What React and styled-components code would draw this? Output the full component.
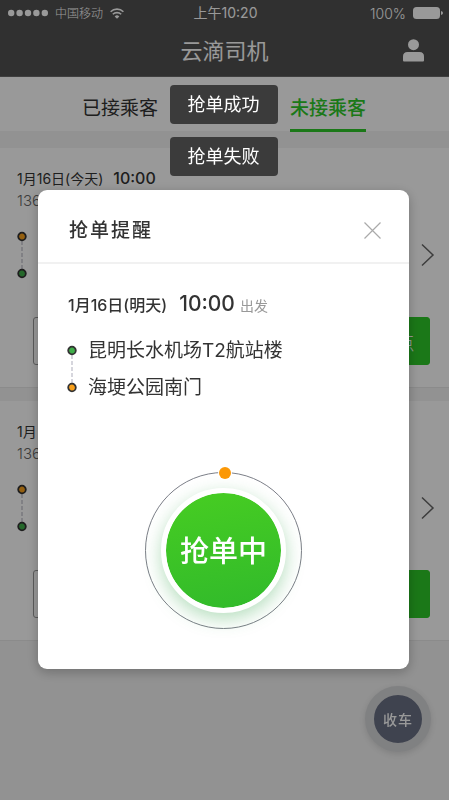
import React from "react";
import styled, { createGlobalStyle } from "styled-components";

const Global = createGlobalStyle`
  *, *::before, *::after { box-sizing: border-box; }
  body { margin: 0; background: #f3f3f3; color: #333; font-family: Inter, "Noto Sans CJK SC", sans-serif; }
  button { font: inherit; color: inherit; border: 0; background: none; padding: 0; cursor: pointer; }
  svg { display: block; }
  h1, h2, p { margin: 0; font-weight: 400; }
`;

const Page = styled.div`
  min-height: 100vh;
`;

const Header = styled.header`
  height: 77px;
  background: #505050;
  border-bottom: 1px solid #6a6a6a;
  color: #fff;
`;

const StatusBar = styled.div`
  display: grid;
  grid-template-columns: 1fr auto 1fr;
  align-items: center;
  height: 26px;
  padding: 0 6px 0 8px;
  font-size: 14px;
  line-height: 20px;
`;

const StatusGroup = styled.div`
  display: flex;
  align-items: center;
  gap: 7px;
  justify-content: ${(p) => (p.$end ? "flex-end" : "flex-start")};
`;

const Carrier = styled.span`
  padding-top: 2px;
  font-size: 12px;
  font-weight: 300;
`;

const Percent = styled.span`
  padding-top: 2px;
  font-weight: 300;
`;

const TitleBar = styled.div`
  display: grid;
  grid-template-columns: 1fr auto 1fr;
  align-items: center;
  height: 50px;
  padding: 0 25px;
`;

const Title = styled.h1`
  grid-column: 2;
  font-size: 22px;
  line-height: 32px;
`;

const ProfileButton = styled.button`
  justify-self: end;
  padding-bottom: 2px;
`;

const Tabs = styled.nav`
  display: flex;
  height: 54px;
  padding: 0 17px 0 16px;
  background: #fff;
`;

const TabSlot = styled.div`
  flex: 1;
  display: flex;
  justify-content: center;
`;

const Tab = styled.button`
  height: 55px;
  padding-top: 12px;
  font-size: 19px;
  font-weight: ${(p) => (p.$active ? 500 : 400)};
  line-height: 28px;
  color: ${(p) => (p.$active ? "#2dc828" : "#333")};
  border-bottom: 3px solid ${(p) => (p.$active ? "#2dc828" : "transparent")};
`;

const Orders = styled.main`
  display: grid;
  gap: 13px;
  padding-top: 17px;
`;

const Order = styled.article`
  height: 240px;
  padding: 20px 14px 24px 17px;
  background: #fff;
  border-bottom: 1px solid #e8e8e8;
`;

const OrderDate = styled.p`
  display: flex;
  align-items: baseline;
  gap: 10px;
  min-height: 21px;
  font-size: 14px;
  line-height: 21px;
`;

const OrderTime = styled.strong`
  font-size: 16px;
  font-weight: 500;
`;

const Phone = styled.p`
  margin-top: 2px;
  font-size: 15px;
  font-weight: 300;
  line-height: 20px;
  color: #666;
`;

const OrderRoute = styled.div`
  display: flex;
  align-items: center;
  justify-content: space-between;
  height: 50px;
  margin-top: 19px;
`;

const OrderActions = styled.div`
  display: grid;
  grid-template-columns: 1fr auto;
  gap: 16px;
  margin-top: 37px;
  padding: 0 5px 0 16px;
`;

const ActionButton = styled.button`
  min-width: 126px;
  height: 48px;
  padding: 0 14px;
  border-radius: 3px;
  border: 1px solid ${(p) => (p.$primary ? "#2dc828" : "#999")};
  background: ${(p) => (p.$primary ? "#2dc828" : "#fff")};
  color: ${(p) => (p.$primary ? "#fff" : "#333")};
  font-size: 19px;
  font-weight: 300;
`;

const EndButton = styled.button`
  position: fixed;
  right: 18px;
  bottom: 48px;
  width: 66px;
  height: 66px;
  border: 9px solid #d6d7d9;
  border-radius: 50%;
  background: #697084;
  box-shadow: 0 2px 6px rgba(0, 0, 0, 0.12);
  color: #fff;
  font-size: 14px;
  font-weight: 500;
  letter-spacing: 1px;
`;

const Overlay = styled.div`
  position: fixed;
  inset: 0;
  display: flex;
  flex-direction: column;
  align-items: center;
  padding: 85px 40px 0 38px;
  background: rgba(0, 0, 0, 0.4);
`;

const Toasts = styled.div`
  display: grid;
  gap: 13px;
  margin-bottom: 14px;
`;

const Toast = styled.p`
  padding: 6px 18px 5px;
  border-radius: 4px;
  background: #3b3b3b;
  color: #fff;
  font-size: 18px;
  line-height: 28px;
`;

const Dialog = styled.section`
  width: 100%;
  border-radius: 9px;
  background: #fff;
  box-shadow: 0 3px 12px rgba(0, 0, 0, 0.25);
`;

const DialogHeader = styled.header`
  display: flex;
  align-items: center;
  justify-content: space-between;
  padding: 26px 28px 16px 31px;
  border-bottom: 2px solid #f1f1f1;
`;

const DialogTitle = styled.h2`
  font-size: 19px;
  font-weight: 500;
  letter-spacing: 2px;
  line-height: 30px;
`;

const CloseButton = styled.button`
  padding-bottom: 2px;
`;

const DialogBody = styled.div`
  padding: 24px 29px 40px;
`;

const Departure = styled.p`
  display: flex;
  align-items: baseline;
  padding-left: 1px;
  font-size: 16px;
  font-weight: 500;
  line-height: 32px;
`;

const DepartureTime = styled.strong`
  margin: 0 5px 0 12px;
  font-size: 21px;
  font-weight: 500;
`;

const Muted = styled.span`
  color: #999;
  font-size: 14px;
  font-weight: 400;
`;

const Trip = styled.div`
  display: flex;
  align-items: center;
  gap: 11px;
  margin-top: 10px;
`;

const Places = styled.div`
  font-size: 19px;
  font-weight: 300;
  line-height: 37px;
`;

const GrabArea = styled.div`
  position: relative;
  display: grid;
  place-items: center;
  width: 157px;
  height: 157px;
  margin: 66px auto 0;
  border: 1px solid #7c7f88;
  border-radius: 50%;
`;

const ProgressDot = styled.span`
  position: absolute;
  top: -6px;
  left: 50%;
  width: 12px;
  height: 12px;
  margin-left: -5px;
  border-radius: 50%;
  background: #fb9806;
  box-shadow: 0 0 0 1px #fff;
`;

const GrabButton = styled.button`
  width: 125px;
  height: 125px;
  padding-bottom: 4px;
  border: 5px solid #fff;
  border-radius: 50%;
  background: linear-gradient(170deg, #47cd22, #31ba2b) padding-box, #fff;
  box-shadow: 0 6px 18px rgba(46, 160, 70, 0.35);
  color: #fff;
  font-size: 29px;
  font-weight: 500;
`;

function Route({ start, end, label }) {
  return (
    <svg width="10" height="48" viewBox="0 0 10 48" role="img" aria-label={label}>
      <path d="M5 10v29" stroke="#c9c9d2" strokeWidth="1.5" strokeDasharray="4 2" />
      <circle cx="5" cy="5.5" r="3.800" fill={start} stroke="#333" strokeWidth="1.800" />
      <circle cx="5" cy="42.5" r="3.800" fill={end} stroke="#333" strokeWidth="1.800" />
    </svg>
  );
}

function OrderCard({ date, time, phone, action }) {
  return (
    <Order>
      <OrderDate>
        {date}
        {time && <OrderTime>{time}</OrderTime>}
      </OrderDate>
      <Phone>{phone}</Phone>
      <OrderRoute>
        <Route start="#f9a01b" end="#3fae49" label="路线" />
        <svg width="14" height="24" viewBox="0 0 14 24" fill="none" stroke="#666" strokeWidth="1.5">
          <path d="M1 1.5 12 12 1 22.5" />
        </svg>
      </OrderRoute>
      <OrderActions>
        <ActionButton aria-label="联系乘客" />
        <ActionButton $primary>{action}</ActionButton>
      </OrderActions>
    </Order>
  );
}

export default function App() {
  return (
    <>
      <Global />
      <Page>
        <Header>
          <StatusBar>
            <StatusGroup>
              <svg width="40" height="8" viewBox="0 0 40 8" fill="#fff">
                {[3.2, 11.6, 20, 28.4, 36.8].map((x) => (
                  <circle key={x} cx={x} cy="4" r="3.2" />
                ))}
              </svg>
              <Carrier>中国移动</Carrier>
              <svg width="14" height="11" viewBox="0 0 14 11" fill="none" stroke="#fff" strokeWidth="1.6">
                <path d="M.6 3.7a9.2 9.2 0 0 1 12.8 0M2.8 6.3a6 6 0 0 1 8.4 0" />
                <path d="M7 10.8 4.7 8.4a3.3 3.3 0 0 1 4.6 0z" fill="#fff" stroke="none" />
              </svg>
            </StatusGroup>
            <span>上午10:20</span>
            <StatusGroup $end>
              <Percent>100%</Percent>
              <svg width="30" height="12" viewBox="0 0 30 12" fill="#fff">
                <rect width="27" height="12" rx="3.5" />
                <path d="M28 4q2 .5 2 2t-2 2z" />
              </svg>
            </StatusGroup>
          </StatusBar>
          <TitleBar>
            <Title>云滴司机</Title>
            <ProfileButton aria-label="个人中心">
              <svg width="21" height="23" viewBox="0 0 21 23" fill="#fff">
                <circle cx="10.5" cy="5.7" r="5.5" />
                <path d="M0 21.500V17.500q0-4.500 4.500-4.500h12q4.500 0 4.500 4.500v4q0 1-1 1H1q-1 0-1-1z" />
              </svg>
            </ProfileButton>
          </TitleBar>
        </Header>
        <Tabs>
          <TabSlot><Tab>已接乘客</Tab></TabSlot>
          <TabSlot><Tab $active>未接乘客</Tab></TabSlot>
        </Tabs>
        <Orders>
          <OrderCard date="1月16日(今天)" time="10:00" phone="136" action="到达上车点" />
          <OrderCard date="1月" phone="136" action="出发" />
        </Orders>
        <EndButton>收车</EndButton>
      </Page>
      <Overlay>
        <Toasts>
          <Toast role="status">抢单成功</Toast>
          <Toast role="status">抢单失败</Toast>
        </Toasts>
        <Dialog role="dialog" aria-labelledby="grab-title">
          <DialogHeader>
            <DialogTitle id="grab-title">抢单提醒</DialogTitle>
            <CloseButton aria-label="关闭">
              <svg width="17" height="17" viewBox="0 0 17 17" stroke="#aaa" strokeWidth="1.200">
                <path d="m.5.5 16 16m0-16-16 16" />
              </svg>
            </CloseButton>
          </DialogHeader>
          <DialogBody>
            <Departure>
              1月16日(明天)
              <DepartureTime>10:00</DepartureTime>
              <Muted>出发</Muted>
            </Departure>
            <Trip>
              <Route start="#3fae49" end="#f9a01b" label="行程" />
              <Places>
                <p>昆明长水机场T2航站楼</p>
                <p>海埂公园南门</p>
              </Places>
            </Trip>
            <GrabArea>
              <ProgressDot />
              <GrabButton>抢单中</GrabButton>
            </GrabArea>
          </DialogBody>
        </Dialog>
      </Overlay>
    </>
  );
}
